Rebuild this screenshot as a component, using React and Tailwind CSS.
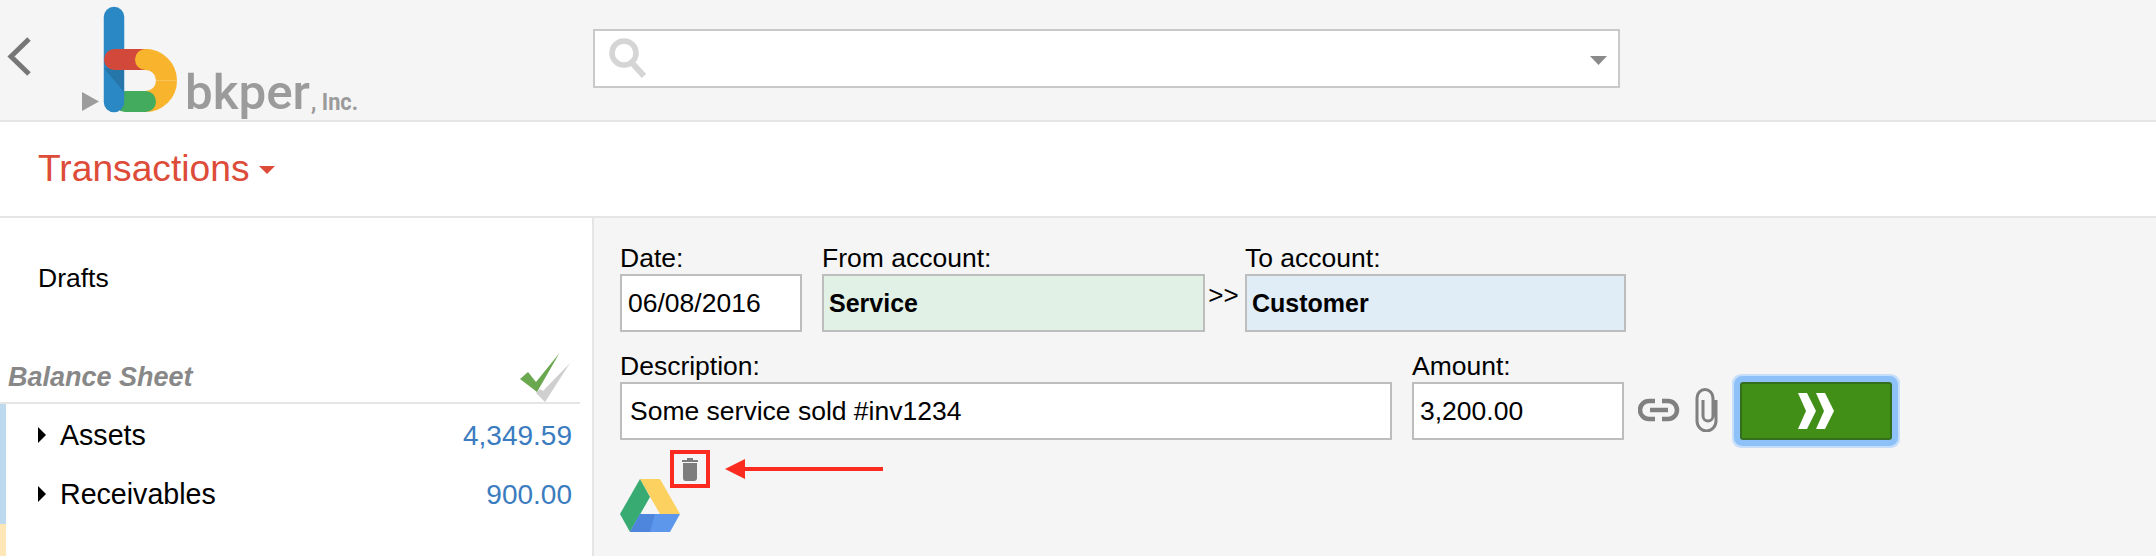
const font = "font-['Liberation_Sans',Arial,sans-serif]";

function Logo() {
  return (
    <svg width="300" height="120" viewBox="80 0 300 120" className="block shrink-0">
      <polygon points="82,92 82,111 99,101.5" fill="#9c9c9c" />
      <path d="M166.5 80.5 A21 21 0 0 1 145.5 101.5" fill="none" stroke="#f9b42d" strokeWidth="21" />
      <path d="M125 101.5 H145.5" fill="none" stroke="#42ab5d" strokeWidth="21" strokeLinecap="round" />
      <path d="M114 17 V102" fill="none" stroke="#2a88c4" strokeWidth="20.5" strokeLinecap="round" />
      <polygon points="104,68 124,68 124,92" fill="#2676a9" />
      <path d="M114.5 59.5 H145" fill="none" stroke="#d2493c" strokeWidth="21" strokeLinecap="round" />
      <path d="M145.5 59.5 A21 21 0 0 1 166.5 80.5" fill="none" stroke="#f9b42d" strokeWidth="21" />
      <circle cx="145.5" cy="59.5" r="10.5" fill="#f9b42d" />
      <text x="185" y="109" fontFamily="Roboto, sans-serif" fontWeight="500" fontSize="48" fill="#9b9b9b" textLength="125" lengthAdjust="spacingAndGlyphs">bkper</text>
      <text x="311" y="110" fontFamily="Roboto, sans-serif" fontWeight="700" fontSize="24" fill="#9b9b9b" textLength="47" lengthAdjust="spacingAndGlyphs">, Inc.</text>
    </svg>
  );
}

function Field({ label, value, className, inputClass }) {
  return (
    <div className={className}>
      <div className="h-[32px] text-[26.5px] leading-[32px] text-black">{label}</div>
      <input
        readOnly
        value={value}
        className={`block h-[58px] w-full border-2 border-[#bdbdbd] text-black outline-none ${font} ${inputClass}`}
      />
    </div>
  );
}

function Row({ name, value }) {
  return (
    <div className="flex h-[59px] items-center justify-between pl-[32px] pr-[8px]">
      <div className="flex items-center gap-[14px]">
        <svg width="8" height="16" viewBox="0 0 8 16"><polygon points="0,0 8,8 0,16" fill="#000" /></svg>
        <span className="text-[28.6px] text-black">{name}</span>
      </div>
      <span className="text-[28px] text-[#3b7cbf]">{value}</span>
    </div>
  );
}

export default function App() {
  return (
    <div className={`flex h-[556px] w-[2156px] flex-col overflow-hidden bg-[#f5f5f5] ${font}`}>
      <header className="flex h-[122px] shrink-0 border-b-2 border-[#e5e5e5] bg-[#f5f5f5]">
        <div className="flex w-[593px] shrink-0">
          <svg width="80" height="120" viewBox="0 0 80 120" className="block shrink-0">
            <path d="M29 39 L11 56.5 L29 74" fill="none" stroke="#777" strokeWidth="5" />
          </svg>
          <Logo />
        </div>
        <div className="mt-[29px] flex h-[59px] w-[1027px] items-center justify-between border-2 border-[#c9c9c9] bg-white pl-[14px] pr-[11px]">
          <svg width="38" height="40" viewBox="0 0 38 40" className="mt-[-2px]">
            <circle cx="15" cy="15" r="12" fill="none" stroke="#d5d5d5" strokeWidth="5.5" />
            <path d="M24 26 L35 38" stroke="#d5d5d5" strokeWidth="6" />
          </svg>
          <svg width="17" height="9" viewBox="0 0 17 9" className="mt-[4px]"><polygon points="0,0 17,0 8.5,9" fill="#8a8a8a" /></svg>
        </div>
      </header>

      <div className="flex h-[96px] shrink-0 items-center gap-[9px] border-b-2 border-[#e5e5e5] bg-white pl-[38px]">
        <span className="text-[37.2px] text-[#dd4b39]">Transactions</span>
        <svg width="16" height="8" viewBox="0 0 16 8" className="mt-[2px]"><polygon points="0,0 16,0 8,8" fill="#dd4b39" /></svg>
      </div>

      <div className="flex min-h-0 flex-1">
        <aside className="w-[594px] shrink-0 border-r-2 border-[#e5e5e5] bg-white">
          <div className="flex h-[120px] items-center pl-[38px] pt-[2px]">
            <span className="text-[26.5px] text-black">Drafts</span>
          </div>
          <div className="flex h-[66px] w-[580px] items-end justify-between border-b-2 border-[#e5e5e5] pl-[8px] pr-[10px]">
            <span className="mb-[5px] text-[27px] font-bold italic text-[#888]">Balance Sheet</span>
            <svg width="50" height="50" viewBox="0 0 50 50" className="mb-[-1px]">
              <polygon points="25,49 16,40 20,36 23,38 50,10" fill="#cfcfcf" />
              <polygon points="0,26 8,19 16,29 39.5,0 17,39" fill="#6aa84f" />
            </svg>
          </div>
          <div className="flex">
            <div className="flex w-[6px] shrink-0 flex-col">
              <div className="h-[120px] bg-[#bcd9ee]" />
              <div className="h-[40px] bg-[#fde7b7]" />
            </div>
            <div className="mt-[2px] w-[574px]">
              <Row name="Assets" value="4,349.59" />
              <Row name="Receivables" value="900.00" />
            </div>
          </div>
        </aside>

        <main className="relative flex-1 bg-[#f5f5f5] pl-[26px] pt-[24px]">
          <div className="flex items-end">
            <Field label="Date:" value="06/08/2016" className="w-[182px]" inputClass="bg-white px-[6px] text-[26.5px]" />
            <Field label="From account:" value="Service" className="ml-[20px] w-[383px]" inputClass="bg-[#e2f1e6] px-[5px] text-[25px] font-bold" />
            <span className="mb-[17px] w-[40px] pr-[3px] text-center text-[26px] text-black">&gt;&gt;</span>
            <Field label="To account:" value="Customer" className="w-[381px]" inputClass="bg-[#e0ecf6] px-[5px] text-[25px] font-bold" />
          </div>
          <div className="mt-[18px] flex items-end">
            <Field label="Description:" value="Some service sold #inv1234" className="w-[772px]" inputClass="bg-white px-[8px] text-[26.5px]" />
            <Field label="Amount:" value="3,200.00" className="ml-[20px] w-[212px]" inputClass="bg-white px-[6px] text-[26.5px]" />
            <svg width="42" height="24" viewBox="0 0 42 24" className="mb-[18px] ml-[14px] shrink-0">
              <path d="M17 3 H11 A9 9 0 0 0 11 21 H17 M24 3 H30 A9 9 0 0 1 30 21 H24" fill="none" stroke="#808080" strokeWidth="4.5" />
              <path d="M12 12 H30" stroke="#808080" strokeWidth="4.5" />
            </svg>
            <svg width="23" height="44" viewBox="0 0 23 44" className="mb-[8px] ml-[15px] shrink-0">
              <path d="M21 12 V33 A9.5 10 0 0 1 2 33 V10 A8 8.5 0 0 1 18 10 V28 A5 5 0 0 1 8 28 V12" fill="none" stroke="#808080" strokeWidth="3" />
            </svg>
            <button className="ml-[22px] flex h-[58px] w-[152px] shrink-0 items-center justify-center rounded-[3px] border-2 border-[#336f1c] bg-[#418f17] shadow-[0_0_0_6px_#8dc1f8,0_0_0_8px_#c5def9]">
              <svg width="36" height="36" viewBox="0 0 36 36">
                <polygon points="0,0 9,0 18,18 9,36 0,36 8,18" fill="#fff" />
                <polygon points="18,0 27,0 36,18 27,36 18,36 26,18" fill="#fff" />
              </svg>
            </button>
          </div>
          <svg width="60" height="53" viewBox="0 0 60 53" className="mt-[39px] block">
            <polygon points="20,0 40,0 60,35 40,35" fill="#fdd15f" />
            <polygon points="20,0 0,35 10,53 30,18" fill="#37ab72" />
            <polygon points="20,35 60,35 50,53 10,53" fill="#5c97ec" />
            <polygon points="20,35 10,53 30,53 35,35" fill="#4f86dd" />
          </svg>
          <div className="absolute left-[76px] top-[232px] flex items-center">
            <div className="flex h-[38px] w-[40px] items-center justify-center border-[4px] border-[#fb2c1f]">
              <svg width="18" height="24" viewBox="0 0 18 24">
                <path d="M1 3 H6 V1 H12 V3 H17 V5 H1 Z" fill="#7d7d7d" />
                <path d="M2 6 H16 V21 Q16 24 13 24 H5 Q2 24 2 21 Z" fill="#7d7d7d" />
              </svg>
            </div>
            <svg width="158" height="20" viewBox="0 0 158 20" className="ml-[15px]">
              <polygon points="0,10 20,0 20,20" fill="#fb2c1f" />
              <rect x="19" y="8" width="139" height="4" fill="#fb2c1f" />
            </svg>
          </div>
        </main>
      </div>
    </div>
  );
}
